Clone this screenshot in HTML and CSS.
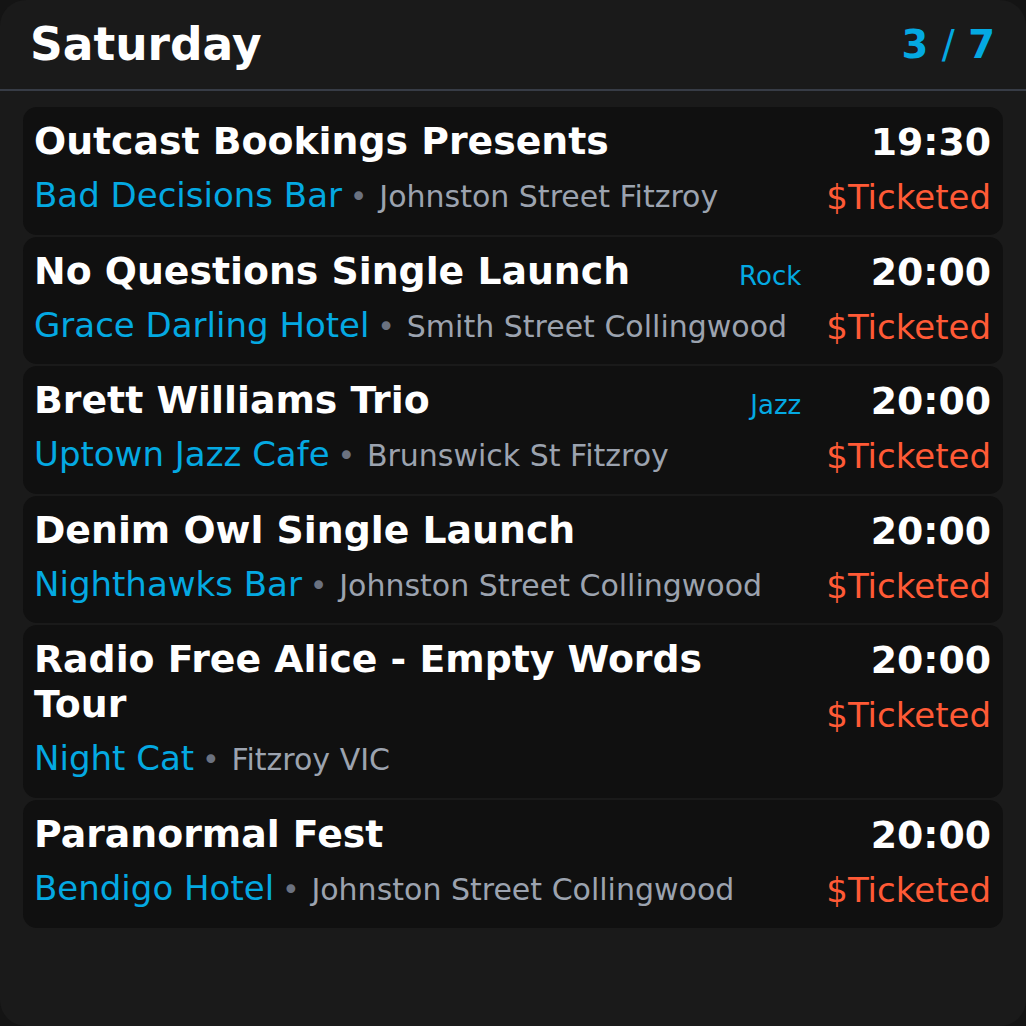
FILE: index.html
```html
<!DOCTYPE html>
<html lang="en">
<head>
<meta charset="utf-8">
<title>Saturday gigs</title>
<link rel="stylesheet" href="styles.css">
</head>
<body>
<div class="screen">
  <header class="header">
    <h1 class="day">Saturday</h1>
    <div class="count">3 <span class="slash">/</span> 7</div>
  </header>
  <main class="list">
    <article class="card">
      <div class="main">
        <div class="title-row"><h2 class="title">Outcast Bookings Presents</h2></div>
        <div class="venue-row"><span class="venue">Bad Decisions Bar</span> <span class="dot">•</span> <span class="place">Johnston Street Fitzroy</span></div>
      </div>
      <div class="side"><div class="time">19:30</div><div class="price">$Ticketed</div></div>
    </article>
    <article class="card">
      <div class="main">
        <div class="title-row"><h2 class="title">No Questions Single Launch</h2><span class="genre">Rock</span></div>
        <div class="venue-row"><span class="venue">Grace Darling Hotel</span> <span class="dot">•</span> <span class="place">Smith Street Collingwood</span></div>
      </div>
      <div class="side"><div class="time">20:00</div><div class="price">$Ticketed</div></div>
    </article>
    <article class="card">
      <div class="main">
        <div class="title-row"><h2 class="title">Brett Williams Trio</h2><span class="genre">Jazz</span></div>
        <div class="venue-row"><span class="venue">Uptown Jazz Cafe</span> <span class="dot">•</span> <span class="place">Brunswick St Fitzroy</span></div>
      </div>
      <div class="side"><div class="time">20:00</div><div class="price">$Ticketed</div></div>
    </article>
    <article class="card">
      <div class="main">
        <div class="title-row"><h2 class="title">Denim Owl Single Launch</h2></div>
        <div class="venue-row"><span class="venue">Nighthawks Bar</span> <span class="dot">•</span> <span class="place">Johnston Street Collingwood</span></div>
      </div>
      <div class="side"><div class="time">20:00</div><div class="price">$Ticketed</div></div>
    </article>
    <article class="card">
      <div class="main">
        <div class="title-row"><h2 class="title">Radio Free Alice - Empty Words Tour</h2></div>
        <div class="venue-row"><span class="venue">Night Cat</span> <span class="dot">•</span> <span class="place">Fitzroy VIC</span></div>
      </div>
      <div class="side"><div class="time">20:00</div><div class="price">$Ticketed</div></div>
    </article>
    <article class="card">
      <div class="main">
        <div class="title-row"><h2 class="title">Paranormal Fest</h2></div>
        <div class="venue-row"><span class="venue">Bendigo Hotel</span> <span class="dot">•</span> <span class="place">Johnston Street Collingwood</span></div>
      </div>
      <div class="side"><div class="time">20:00</div><div class="price">$Ticketed</div></div>
    </article>
  </main>
</div>
</body>
</html>
```

FILE: styles.css
```css
* { box-sizing: border-box; }
html, body {
  margin: 0;
  padding: 0;
  background: #141414;
}
body {
  font-family: "DejaVu Sans", "Liberation Sans", sans-serif;
  color: #ffffff;
}
.screen {
  width: 1026px;
  height: 1026px;
  background: #1a1a1a;
  border-radius: 26px;
  overflow: hidden;
}
.header {
  height: 91px;
  display: flex;
  align-items: center;
  justify-content: space-between;
  padding: 0 31px 0 30px;
  border-bottom: 2px solid #373c46;
}
.day {
  margin: 0;
  font-size: 45.5px;
  font-weight: bold;
  line-height: 52px;
  color: #ffffff;
}
.count {
  font-size: 38.5px;
  font-weight: bold;
  color: #04a9e2;
  line-height: 44px;
  margin-top: 1px;
}
.slash {
  font-weight: normal;
}
.list {
  display: flex;
  flex-direction: column;
  gap: 2px;
  padding: 16px 23px 0 23px;
}
.card {
  background: #101010;
  border-radius: 14px;
  display: flex;
  align-items: flex-start;
  gap: 25px;
  padding: 12px 12px 19.6px 11px;
}
.main {
  flex: 1;
  min-width: 0;
}
.title-row {
  display: flex;
  align-items: baseline;
  gap: 20px;
}
.title {
  flex: 1;
  margin: 0;
  font-size: 37.8px;
  line-height: 45px;
  font-weight: bold;
  color: #ffffff;
}
.genre {
  font-size: 26px;
  color: #04a9e2;
  white-space: nowrap;
  position: relative;
  top: 1px;
}
.venue-row {
  margin-top: 11px;
  font-size: 34px;
  line-height: 40px;
  height: 40px;
  white-space: nowrap;
}
.venue {
  color: #04a9e2;
}
.dot {
  font-size: 30px;
  line-height: 1;
  color: #6b7280;
  margin: 0 1px 0 -3px;
}
.place {
  font-size: 30px;
  line-height: 1;
  color: #9ca3af;
}
.side {
  text-align: right;
  white-space: nowrap;
}
.time {
  font-size: 37.8px;
  line-height: 47px;
  font-weight: bold;
  color: #ffffff;
}
.price {
  margin-top: 13px;
  font-size: 34px;
  line-height: 36px;
  color: #ff5a36;
}
```
